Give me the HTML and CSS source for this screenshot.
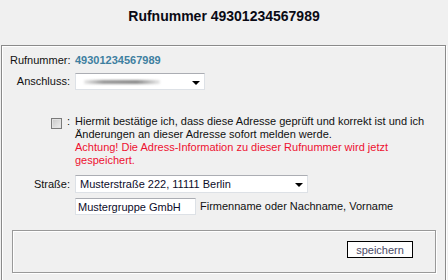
FILE: index.html
```html
<!DOCTYPE html>
<html lang="de">

<head>
  <meta charset="UTF-8">
  <meta name="viewport" content="width=device-width, initial-scale=1.0">
  <title>Rufnummer</title>
  <link rel="stylesheet" href="styles.css">
</head>

<body>
  <h1 class="title">Rufnummer 49301234567989</h1>

  <!-- Adresse zur Rufnummer -->
  <div class="panel">
    <div class="row row-number">
      <span class="label">Rufnummer:</span>
      <span class="number">49301234567989</span>
    </div>
    <div class="row row-line">
      <span class="label">Anschluss:</span>
      <div class="select select-short">
        <span class="blurred"></span>
        <span class="arrow"></span>
      </div>
    </div>
    <div class="row row-confirm">
      <span class="label check-cell"><span class="checkbox"></span>:</span>
      <div class="confirm">
        <p>Hiermit bestätige ich, dass diese Adresse geprüft und korrekt ist und ich Änderungen an dieser Adresse sofort melden werde.</p>
        <p class="warn">Achtung! Die Adress-Information zu dieser Rufnummer wird jetzt gespeichert.</p>
      </div>
    </div>
    <div class="row row-street">
      <span class="label">Straße:</span>
      <div class="select select-long">
        <span class="select-text">Musterstraße 222, 11111 Berlin</span>
        <span class="arrow"></span>
      </div>
    </div>
    <div class="row row-name">
      <span class="label"></span>
      <input class="text-input" type="text" value="Mustergruppe GmbH">
      <span class="hint">Firmenname oder Nachname, Vorname</span>
    </div>

    <div class="actions">
      <button class="btn" type="button">speichern</button>
    </div>
  </div>
</body>

</html>
```

FILE: styles.css
```css
body {
  margin: 0;
  background-color: #f0f0f0;
  font-family: "Liberation Sans", Arial, sans-serif;
  font-size: 11px;
  color: #111;
}

.title {
  margin: 0;
  padding-top: 8px;
  font-size: 14px;
  line-height: 17px;
  text-align: center;
  color: #0a0a14;
}

.panel {
  margin: 20px 2px 0 1px;
  border: 1px solid #8a8a8a;
  box-shadow: 1px 1px 0 #fff, inset 1px 1px 0 #fff;
  padding: 8px 0 9px 0;
}

.row {
  display: flex;
  align-items: center;
  line-height: 13px;
}

.label {
  width: 60px;
  margin-left: 8px;
  margin-right: 5px;
  text-align: right;
  flex-shrink: 0;
}

.number {
  font-weight: bold;
  color: #3e7fa0;
}

.row-line {
  margin-top: 6px;
}

.row-confirm {
  margin-top: 25px;
  align-items: flex-start;
}

.row-street {
  margin-top: 8px;
}

.row-name {
  margin-top: 5px;
}

.select {
  position: relative;
  display: flex;
  align-items: center;
  box-sizing: border-box;
  background-color: #fff;
  border: 1px solid #dde1e6;
  border-top-color: #abadb3;
}

.select-short {
  width: 130px;
  height: 17px;
}

.select-long {
  width: 233px;
  height: 18px;
}

.select-text {
  padding-left: 4px;
  color: #0c0c2a;
}

.blurred {
  display: block;
  margin-left: 8px;
  width: 76px;
  height: 4px;
  background: linear-gradient(to right, rgba(150, 150, 150, 0.2), #9a9a9a 25%, #8c8c8c 70%, rgba(150, 150, 150, 0.2));
  filter: blur(1.2px);
}

.arrow {
  position: absolute;
  right: 4px;
  top: 50%;
  margin-top: -1px;
  border-left: 4px solid transparent;
  border-right: 4px solid transparent;
  border-top: 4px solid #000;
}

.check-cell {
  display: flex;
  justify-content: flex-end;
  align-items: flex-start;
}

.checkbox {
  width: 9px;
  height: 9px;
  margin-top: 3px;
  margin-right: 5px;
  border: 1px solid #7a7a7a;
  background: linear-gradient(135deg, #c6c6c6, #eeeeee);
  box-shadow: inset 0 0 0 1px #e2e2e2;
}

.confirm {
  width: 356px;
}

.confirm p {
  margin: 0;
}

.warn {
  color: #ee1030;
}

.text-input {
  box-sizing: border-box;
  width: 121px;
  height: 17px;
  margin: 0 4px 0 0;
  padding: 0 2px;
  font-family: inherit;
  font-size: 11px;
  color: #0c0c2a;
  background-color: #fff;
  border: 1px solid #dde1e6;
  border-top-color: #abadb3;
  outline: none;
}

.actions {
  margin: 15px 9px 0 10px;
  height: 41px;
  border: 1px solid #999;
  box-shadow: 1px 1px 0 #fff, inset 1px 1px 0 #fff;
  display: flex;
  justify-content: flex-end;
  align-items: flex-start;
}

.btn {
  margin-top: 10px;
  margin-right: 22px;
  width: 66px;
  height: 17px;
  padding: 0;
  font-family: inherit;
  font-size: 11px;
  color: #4a4a66;
  background-color: #fff;
  border: 1px solid #000;
  border-radius: 0;
}
```
